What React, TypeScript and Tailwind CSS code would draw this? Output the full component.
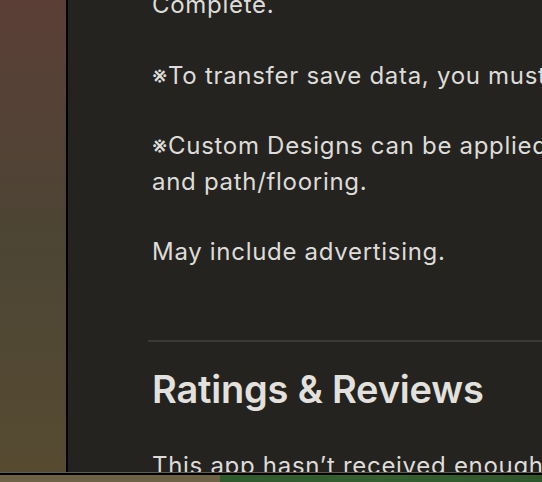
import React from 'react';

const paragraphs: string[][] = [
  ['Complete.'],
  ['※To transfer save data, you must link your Nintendo Account.'],
  ['※Custom Designs can be applied to clothing, umbrellas', 'and path/flooring.'],
  ['May include advertising.'],
];

const Description: React.FC = () => {
  return (
    <div className="flex flex-col gap-[35px] text-[24px] leading-[35.5px] tracking-[0.7px] text-[#dedcd8] whitespace-nowrap">
      {paragraphs.map((lines, i) => (
        <p key={i}>
          {lines.map((l, j) => (
            <span key={j} className="block">
              {l}
            </span>
          ))}
        </p>
      ))}
    </div>
  );
};

const App: React.FC = () => {
  return (
    <div
      className="w-[542px] h-[482px] overflow-hidden flex flex-col bg-black"
      style={{ fontFamily: 'Inter, "Noto Sans", sans-serif' }}
    >
      <div className="flex flex-row h-[472px]">
        {/* wallpaper edge */}
        <div className="w-[66px] shrink-0 bg-gradient-to-b from-[#5b3f37] via-[#4d4535] to-[#564b31]" />
        <div className="w-[2px] shrink-0 bg-black" />

        {/* store panel */}
        <div className="flex-1 bg-[#242320] overflow-hidden">
          <div className="-mt-[13px] pl-[84px]">
            <Description />

            <div className="mt-[70px] ml-[-4px] h-[2px] bg-[#3a3935]" />

            <h2 className="mt-[24px] text-[38px] leading-[46px] font-semibold tracking-[-0.2px] text-[#e2e1de] whitespace-nowrap">
              Ratings &amp; Reviews
            </h2>

            <p className="mt-[36px] text-[24px] leading-[35.5px] tracking-[0.7px] text-[#dedcd8] whitespace-nowrap">
              This app hasn’t received enough ratings or reviews to display an overview.
            </p>
          </div>
        </div>
      </div>

      {/* window bottom edge */}
      <div className="h-[1px] bg-[#5c5a52]" />
      <div className="h-[2px] bg-black" />
      <div className="flex-1 flex flex-row">
        <div className="w-[220px] bg-[#6e6247]" />
        <div className="flex-1 bg-gradient-to-r from-[#2f5a2e] via-[#355f30] to-[#2e562c]" />
      </div>
    </div>
  );
};

export default App;
